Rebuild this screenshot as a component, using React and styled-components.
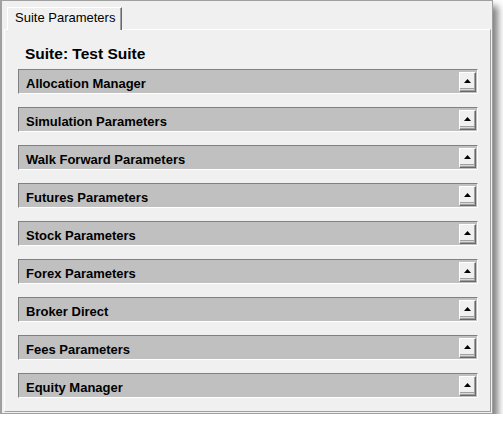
import React from "react";
import styled, { createGlobalStyle } from "styled-components";

const GlobalStyle = createGlobalStyle`
  body {
    margin: 0;
    background: #ffffff;
    font-family: "Liberation Sans", Arial, sans-serif;
  }
`;

const Window = styled.div`
  box-sizing: border-box;
  width: 493px;
  height: 414px;
  display: flex;
  flex-direction: column;
  background: #f0f0f0;
  border: 1px solid #a0a0a0;
  border-left-width: 2px;
  box-shadow: 5px 6px 7px rgba(0, 0, 0, 0.5);
`;

const TabStrip = styled.div`
  display: flex;
  padding: 6px 0 0 5px;
`;

const Tab = styled.div`
  position: relative;
  z-index: 1;
  height: 23px;
  box-sizing: border-box;
  margin-bottom: -1px;
  padding: 0 6px 3px 7px;
  line-height: 19px;
  font-size: 13px;
  color: #000;
  background: #f0f0f0;
  border-top: 1px solid #ffffff;
  border-left: 1px solid #ffffff;
  border-right: 1px solid #696969;
  box-shadow: inset -1px 0 #a0a0a0;
`;

const TabPage = styled.div`
  flex: 1;
  margin: 0 1px 1px 2px;
  padding: 15px 12px 0 13px;
  border: 1px solid #a0a0a0;
  border-top-color: #ffffff;
  border-left-color: #ffffff;
`;

const Heading = styled.div`
  margin: 0 0 6px 7px;
  font-size: 15.5px;
  font-weight: bold;
  line-height: 18px;
  color: #000;
`;

const SectionList = styled.div`
  display: flex;
  flex-direction: column;
  gap: 13px;
`;

const SectionBar = styled.div`
  box-sizing: border-box;
  height: 25px;
  display: flex;
  align-items: center;
  justify-content: space-between;
  padding: 0 1px 0 7px;
  background: #c0c0c0;
  border: 1px solid #ffffff;
  border-top-color: #808080;
  border-left-color: #808080;
`;

const SectionTitle = styled.span`
  padding-top: 3px;
  font-size: 13px;
  font-weight: bold;
  color: #000;
`;

const CollapseButton = styled.button`
  box-sizing: border-box;
  width: 17px;
  height: 20px;
  margin-top: 1px;
  padding: 0 0 3px;
  display: flex;
  align-items: center;
  justify-content: center;
  background: #f0f0f0;
  border: 1px solid #696969;
  border-top-color: #ffffff;
  border-left-color: #ffffff;
  box-shadow: inset -1px -1px #a0a0a0, inset 0 -2px #d8d8d8, inset 0 -3px #a0a0a0;
  cursor: pointer;
`;

function UpArrow() {
  return (
    <svg width="7" height="4" viewBox="0 0 7 4">
      <polygon points="3.5,0 7,4 0,4" fill="#000" />
    </svg>
  );
}

const sections = [
  "Allocation Manager",
  "Simulation Parameters",
  "Walk Forward Parameters",
  "Futures Parameters",
  "Stock Parameters",
  "Forex Parameters",
  "Broker Direct",
  "Fees Parameters",
  "Equity Manager",
];

export default function App() {
  return (
    <>
      <GlobalStyle />
      <Window>
        <TabStrip>
          <Tab>Suite Parameters</Tab>
        </TabStrip>
        <TabPage>
          <Heading>Suite: Test Suite</Heading>
          <SectionList>
            {sections.map((name) => (
              <SectionBar key={name}>
                <SectionTitle>{name}</SectionTitle>
                <CollapseButton>
                  <UpArrow />
                </CollapseButton>
              </SectionBar>
            ))}
          </SectionList>
        </TabPage>
      </Window>
    </>
  );
}
